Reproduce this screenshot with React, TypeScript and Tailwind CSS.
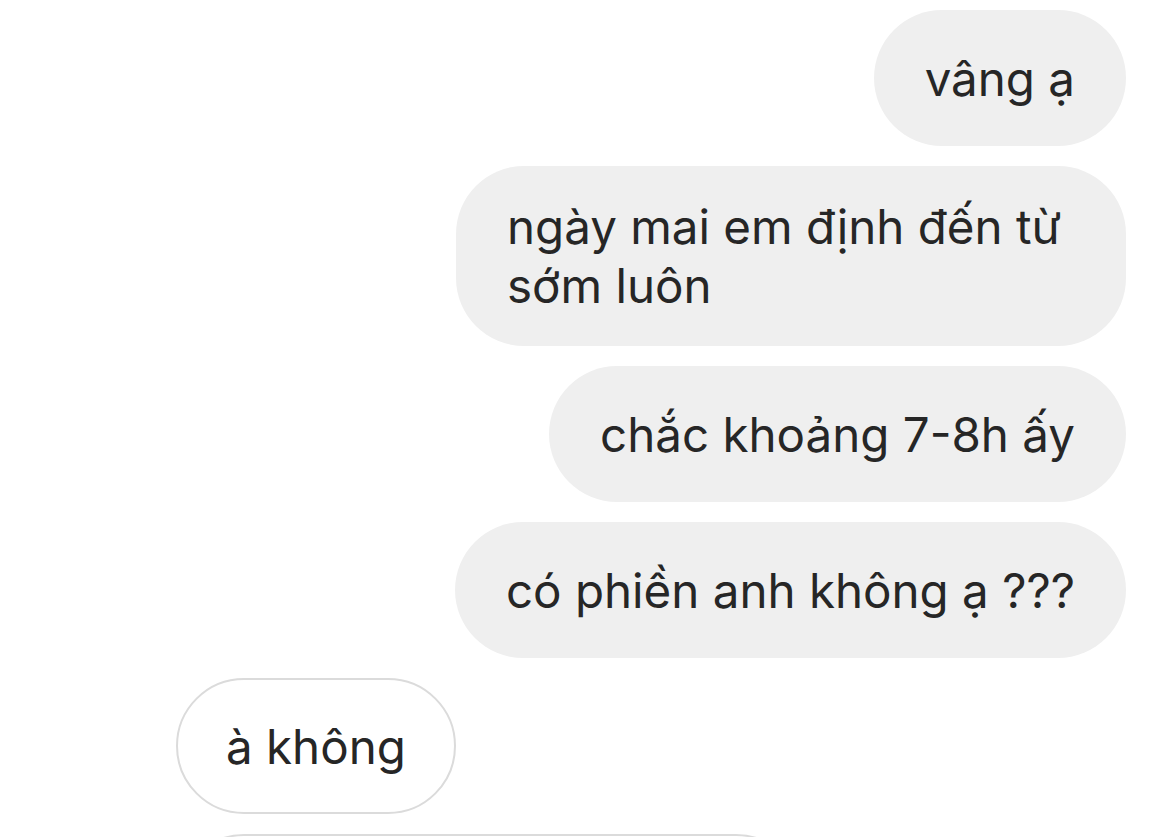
import React from "react";

const font = { fontFamily: "Inter, 'Liberation Sans', sans-serif" };

function Right({ children, className = "" }: { children: React.ReactNode; className?: string }) {
  return (
    <div
      className={
        "flex min-h-[136px] items-center rounded-[68px] bg-[#efefef] px-[51px] py-[31px] text-[47.5px] leading-[59px] text-[#262626] " +
        className
      }
    >
      <span>{children}</span>
    </div>
  );
}

export default function App() {
  return (
    <div className="min-h-[837px] h-[837px] overflow-hidden bg-white" style={font}>
      <div className="flex flex-col gap-[20px] pl-[176px] pr-[43px] pt-[10px]">
        <div className="flex justify-end">
          <Right>vâng ạ</Right>
        </div>
        <div className="flex justify-end">
          <Right className="w-[670px]">
            ngày mai em định đến từ
            <br />
            sớm luôn
          </Right>
        </div>
        <div className="flex justify-end">
          <Right>chắc khoảng 7-8h ấy</Right>
        </div>
        <div className="flex justify-end">
          <Right>có phiền anh không ạ ???</Right>
        </div>
        <div className="flex justify-start">
          <div className="flex min-h-[136px] items-center rounded-[68px] border-2 border-[#dbdbdb] bg-white px-[48px] py-[31px] text-[47.5px] leading-[59px] text-[#262626]">
            <span>à không</span>
          </div>
        </div>
        <div className="flex justify-start">
          <div className="h-[136px] w-[628px] rounded-[68px] border-2 border-[#dbdbdb] bg-white" />
        </div>
      </div>
    </div>
  );
}
